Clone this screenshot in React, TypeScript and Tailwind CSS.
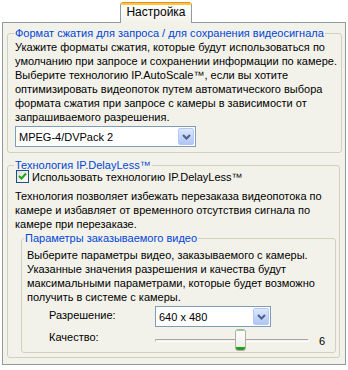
import React from "react";

function Combo({ text, w }: { text: string; w: string }) {
  return (
    <div className={`${w} h-[21px] border border-[#7f9db9] bg-white flex items-center justify-between`}>
      <span className="pl-[3px] leading-[14px]">{text}</span>
      <div className="w-[16px] h-[17px] mr-[1px] rounded-[2px] border border-[#b3c8f5] bg-gradient-to-b from-[#dde7fd] to-[#afc5f5] flex items-center justify-center">
        <svg width="9" height="6" viewBox="0 0 9 6">
          <path d="M1 1 L4.5 4.5 L8 1" fill="none" stroke="#4d6185" strokeWidth="2" />
        </svg>
      </div>
    </div>
  );
}

function Check() {
  return (
    <div className="w-[13px] h-[13px] border border-[#1c5180] bg-gradient-to-br from-[#dcdcd7] to-white flex items-center justify-center">
      <svg width="9" height="9" viewBox="0 0 9 9">
        <path d="M1 4 L3.5 6.5 L8 1.5" fill="none" stroke="#21a121" strokeWidth="2" />
      </svg>
    </div>
  );
}

function Lines({ lines }: { lines: string[] }) {
  return (
    <div className="leading-[14px] whitespace-nowrap">
      {lines.map((l) => (
        <div key={l}>{l}</div>
      ))}
    </div>
  );
}

export default function App() {
  return (
    <div className="w-[348px] h-[370px] bg-white [font-family:'Liberation_Sans',Arial,sans-serif] text-[11px] text-black overflow-hidden">
      <div className="h-[22px] flex pl-[120px] pt-[2px]">
        <div className="relative z-10 w-[72px] h-[21px] rounded-t-[3px] border-x border-[#919b9c] border-t-[3px] border-t-[#ffc73c] bg-gradient-to-b from-[#fefefe] to-[#f3f2ea] flex items-center justify-center leading-[14px] text-[12px] pb-[4px]">
          <div className="absolute -top-[3px] left-[1px] right-[1px] h-px bg-[#e68b2c]" />
          Настройка
        </div>
      </div>
      <div className="mx-[2px] h-[343px] border border-[#919b9c] bg-[#f3f2ea] pl-[4px] pr-[5px] pt-[4px]">
        <fieldset className="border border-[#d0d0bf] rounded-[3px] pl-[7px] pr-[4px] pb-[5px]">
          <legend className="-ml-[1px] px-[1px] text-[#0046d5] leading-[13px]">
            Формат сжатия для запроса / для сохранения видеосигнала
          </legend>
          <Lines
            lines={[
              "Укажите форматы сжатия, которые будут использоваться по",
              "умолчанию при запросе и сохранении информации по камере.",
              "Выберите технологию IP.AutoScale™, если вы хотите",
              "оптимизировать видеопоток путем автоматического выбора",
              "формата сжатия при запросе с камеры в зависимости от",
              "запрашиваемого разрешения.",
            ]}
          />
          <div className="mt-[2px]">
            <Combo text="MPEG-4/DVPack 2" w="w-[181px]" />
          </div>
        </fieldset>
        <fieldset className="mt-[6px] border border-[#d0d0bf] rounded-[3px] pl-[7px] pr-[3px] pb-[4px]">
          <legend className="-ml-[1px] px-[1px] text-[#0046d5] leading-[13px]">
            Технология IP.DelayLess™
          </legend>
          <div className="flex items-center gap-[3px] ml-[1px] h-[15px] -mt-[3px]">
            <Check />
            <span className="leading-[14px]">Использовать технологию IP.DelayLess™</span>
          </div>
          <div className="mt-[5px]">
            <Lines
              lines={[
                "Технология позволяет избежать перезаказа видеопотока по",
                "камере и избавляет от временного отсутствия сигнала по",
                "камере при перезаказе.",
              ]}
            />
          </div>
          <fieldset className="mt-[1px] ml-[6px] border border-[#d0d0bf] rounded-[3px] pl-[5px] pr-[4px]">
            <legend className="-ml-[3px] px-[1px] text-[#0046d5] leading-[13px]">
              Параметры заказываемого видео
            </legend>
            <div className="mt-[3px]">
              <Lines
                lines={[
                  "Выберите параметры видео, заказываемого с камеры.",
                  "Указанные значения разрешения и качества будут",
                  "максимальными параметрами, которые будет возможно",
                  "получить в системе с камеры.",
                ]}
              />
            </div>
            <div className="flex items-center mt-[2px]">
              <span className="w-[128px] pl-[22px] -mt-[3px]">Разрешение:</span>
              <Combo text="640 x 480" w="w-[116px]" />
            </div>
            <div className="flex mt-[2px] h-[23px]">
              <span className="w-[128px] pl-[22px] leading-[14px] mt-[1px]">Качество:</span>
              <div className="relative w-[154px] h-[23px]">
                <div className="absolute left-0 right-0 top-[10px] h-[3px] rounded-[2px] border border-t-[#a7a6aa] border-l-[#a7a6aa] border-b-white border-r-white bg-[#f0efe8]" />
                <div className="absolute left-[80px] top-0 w-[11px] h-[22px] rounded-[3px] border border-[#b0afa5] bg-gradient-to-b from-white to-[#ecebe6] overflow-hidden">
                  <div className="absolute bottom-0 left-0 right-0 h-[3px] bg-[#21a121]" />
                  <div className="absolute top-0 left-0 right-0 h-[1px] bg-[#8bd48b]" />
                </div>
              </div>
              <span className="ml-[10px] self-center leading-[14px]">6</span>
            </div>
          </fieldset>
        </fieldset>
      </div>
    </div>
  );
}
